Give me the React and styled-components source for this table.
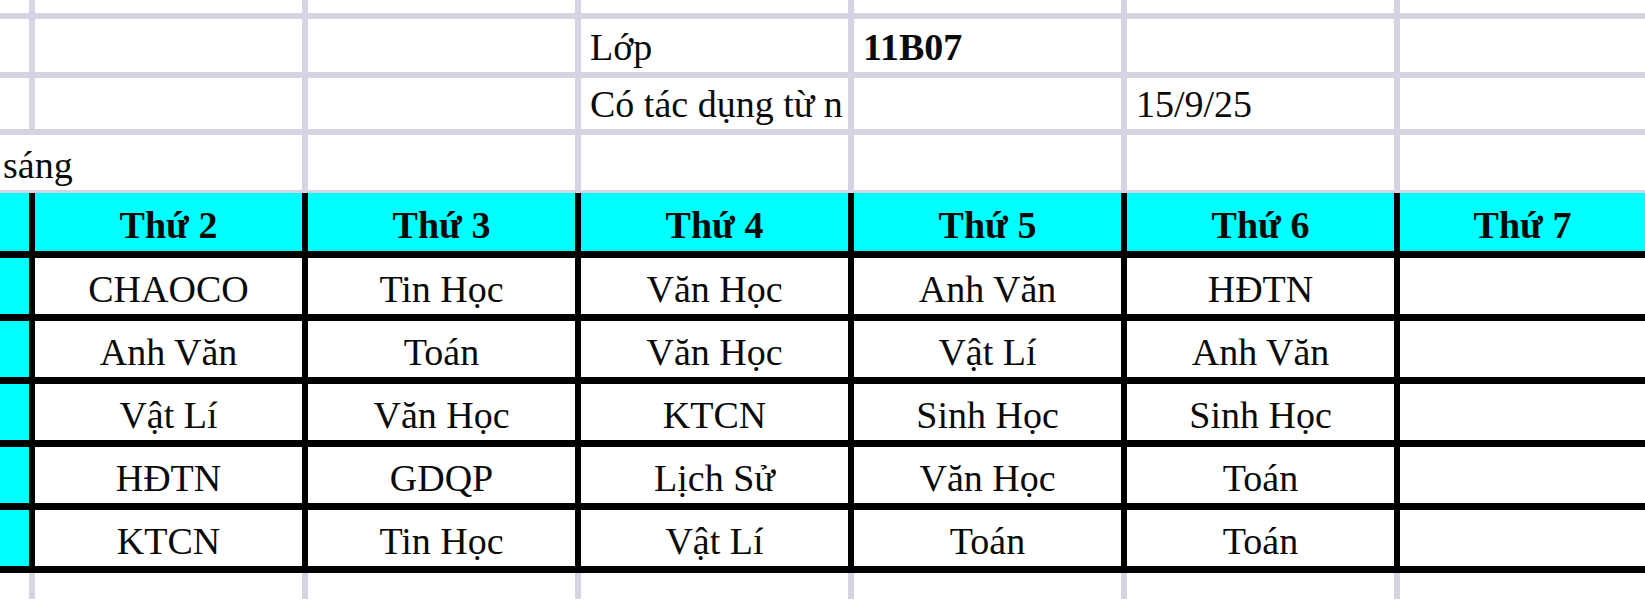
import React from "react";
import styled, { createGlobalStyle, css } from "styled-components";

const Global = createGlobalStyle`
  html, body { margin: 0; padding: 0; background: #fff; }
  body { overflow: hidden; width: 1645px; height: 600px; }
  #root { width: 1645px; }
`;

const COLS = "29px 267px 267px 267px 267px 267px 1fr";

const Sheet = styled.div`
  display: flex;
  flex-direction: column;
  width: 1645px;
  font-family: "Liberation Serif", "Times New Roman", serif;
  color: #0a0a0a;
`;

const InfoGrid = styled.div`
  display: grid;
  grid-template-columns: ${COLS};
  grid-template-rows: 13px 53px 51px 55px;
  gap: 6px;
  padding-bottom: 3px;
  background: #d4d4e2;
`;

const InfoCell = styled.div`
  background: #fff;
  display: flex;
  align-items: flex-end;
  padding: 0 0 6px ${(p) => (p.$flush ? "3px" : "9px")};
  font-size: 38px;
  line-height: 38px;
  white-space: nowrap;
  font-weight: ${(p) => (p.$bold ? 700 : 400)};
  ${(p) =>
    p.$span &&
    css`
      grid-column: span ${p.$span};
    `}
`;

const Table = styled.div`
  display: grid;
  grid-template-columns: ${COLS};
  grid-template-rows: 58px repeat(5, 56px);
  column-gap: 6px;
  row-gap: 7px;
  padding-bottom: 7px;
  background: #000;
`;

const Cell = styled.div`
  background: ${(p) => (p.$head || p.$side ? "#0ff" : "#fff")};
  display: flex;
  align-items: flex-end;
  justify-content: center;
  padding-bottom: ${(p) => (p.$head ? "7px" : "6px")};
  font-size: 38px;
  line-height: 38px;
  font-weight: ${(p) => (p.$head ? 700 : 400)};
  white-space: nowrap;
`;

const Footer = styled.div`
  display: grid;
  grid-template-columns: ${COLS};
  grid-template-rows: 26px;
  column-gap: 6px;
  background: #d4d4e2;
`;

const Blank = styled.div`
  background: #fff;
`;

const days = ["Thứ 2", "Thứ 3", "Thứ 4", "Thứ 5", "Thứ 6", "Thứ 7"];
const rows = [
  ["CHAOCO", "Tin Học", "Văn Học", "Anh Văn", "HĐTN", ""],
  ["Anh Văn", "Toán", "Văn Học", "Vật Lí", "Anh Văn", ""],
  ["Vật Lí", "Văn Học", "KTCN", "Sinh Học", "Sinh Học", ""],
  ["HĐTN", "GDQP", "Lịch Sử", "Văn Học", "Toán", ""],
  ["KTCN", "Tin Học", "Vật Lí", "Toán", "Toán", ""],
];

const blanks = (n, key) =>
  Array.from({ length: n }, (_, i) => <InfoCell key={`${key}${i}`} />);

export default function App() {
  return (
    <>
      <Global />
      <Sheet>
        <InfoGrid>
          {blanks(7, "r0-")}
          {blanks(3, "r1a-")}
          <InfoCell>Lớp</InfoCell>
          <InfoCell $bold>11B07</InfoCell>
          {blanks(2, "r1b-")}
          {blanks(3, "r2a-")}
          <InfoCell>Có tác dụng từ n</InfoCell>
          <InfoCell />
          <InfoCell>15/9/25</InfoCell>
          <InfoCell />
          <InfoCell $flush $span={2}>
            sáng
          </InfoCell>
          {blanks(5, "r3-")}
        </InfoGrid>
        <Table>
          <Cell $side />
          {days.map((d) => (
            <Cell key={d} $head>
              {d}
            </Cell>
          ))}
          {rows.map((r, i) => (
            <React.Fragment key={i}>
              <Cell $side />
              {r.map((s, j) => (
                <Cell key={j}>{s}</Cell>
              ))}
            </React.Fragment>
          ))}
        </Table>
        <Footer>
          {Array.from({ length: 7 }, (_, i) => (
            <Blank key={i} />
          ))}
        </Footer>
      </Sheet>
    </>
  );
}
